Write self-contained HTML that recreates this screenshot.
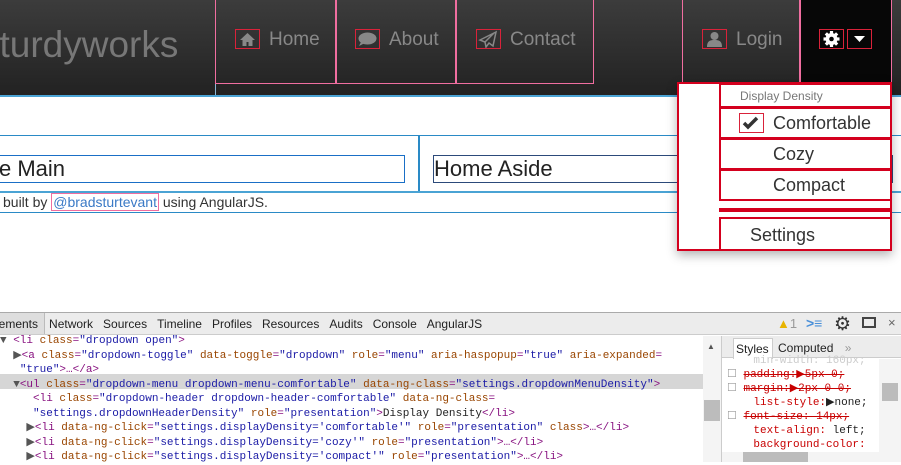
<!DOCTYPE html>
<html><head><meta charset="utf-8"><style>
*{box-sizing:border-box;margin:0;padding:0}
body{width:901px;height:462px;overflow:hidden;background:#fff;font-family:"Liberation Sans",sans-serif;position:relative}
.abs{position:absolute}
.nav{left:0;top:0;width:901px;height:95px;background:linear-gradient(#3c3c3c,#222)}
.logo{left:-19px;top:24px;font-size:37px;color:#777}
.ni{top:0;height:84px;border:1px solid #f06ea0;border-top:none}
.ni span.t{position:absolute;top:29px;font-size:19px;color:#888}
.ib{position:absolute;top:29px;width:25px;height:20px;border:1px solid #d9223a}
.dd{left:677px;top:82px;width:215px;height:169px;border:2px solid #d4001e;background:#fff;box-shadow:0 4px 10px rgba(0,0,0,.3)}
.it{position:absolute;left:40px;width:173px;border:2px solid #d4001e;font-size:18px;color:#333}
.code{font-family:"Liberation Mono",monospace;font-size:11px;line-height:14.5px;white-space:pre;color:#881280}
.at{color:#994500}.v{color:#1a1aa6}.tx{color:#222}
.css{font-family:"Liberation Mono",monospace;font-size:11px;line-height:14px;white-space:pre;color:#c80000}
</style></head><body>
<div class="abs nav"></div>
<div class="abs logo">sturdyworks</div>
<div class="abs" style="left:215px;top:0;width:1px;height:95px;background:#8ab8d6"></div>
<div class="abs ni" style="left:215px;width:121px"><div class="ib" style="left:19px"><svg width="23" height="18" viewBox="0 0 23 18"><path d="M11.5 3L4 10h2.5v6h4v-4h2v4h4v-6H19z" fill="#888"/></svg></div><span class="t" style="left:53px">Home</span></div>
<div class="abs ni" style="left:336px;width:120px"><div class="ib" style="left:18px"><svg width="23" height="18" viewBox="0 0 23 18"><ellipse cx="11.5" cy="8.5" rx="9" ry="6" fill="#888"/><path d="M5 12l-2 4 6-3z" fill="#888"/></svg></div><span class="t" style="left:52px">About</span></div>
<div class="abs ni" style="left:456px;width:138px"><div class="ib" style="left:19px"><svg width="23" height="18" viewBox="0 0 23 18"><path d="M19 2L3 10l5 2 1 5 3-4 4 3z M8 12l9-9" fill="none" stroke="#888" stroke-width="1.5"/></svg></div><span class="t" style="left:53px">Contact</span></div>
<div class="abs ni" style="left:682px;width:118px;border-top:none"><div class="ib" style="left:19px"><svg width="23" height="18" viewBox="0 0 23 18"><circle cx="11.5" cy="6" r="4" fill="#888"/><path d="M4 17c0-6 3-7 7.5-7s7.5 1 7.5 7z" fill="#888"/></svg></div><span class="t" style="left:53px">Login</span></div>
<div class="abs" style="left:800px;top:0;width:92px;height:84px;background:#070707;border-left:1px solid #f06ea0;border-right:1px solid #f06ea0"></div>
<div class="abs" style="left:819px;top:29px;width:25px;height:20px;border:1px solid #d9223a"><svg width="23" height="18" viewBox="0 0 23 18"><g transform="translate(11.5 9)" fill="#fff"><circle r="6"/><rect x="-1.6" y="-8" width="3.2" height="16"/><rect x="-1.6" y="-8" width="3.2" height="16" transform="rotate(45)"/><rect x="-1.6" y="-8" width="3.2" height="16" transform="rotate(90)"/><rect x="-1.6" y="-8" width="3.2" height="16" transform="rotate(135)"/><circle r="2.3" fill="#070707"/></g></svg></div>
<div class="abs" style="left:847px;top:29px;width:25px;height:20px;border:1px solid #d9223a"><svg width="23" height="18"><path d="M6 6h11l-5.5 6z" fill="#fff"/></svg></div>
<div class="abs" style="left:0;top:95px;width:901px;height:2px;background:#4aa3d4"></div>
<div class="abs" style="left:0;top:135px;width:901px;height:1px;background:#2a8ac6"></div>
<div class="abs" style="left:418px;top:135px;width:2px;height:57px;background:#2a8ac6"></div>
<div class="abs" style="left:-2px;top:155px;width:407px;height:28px;border:1px solid #1a6fc6;font-size:22px;line-height:26px;color:#222">e Main</div>
<div class="abs" style="left:433px;top:155px;width:460px;height:28px;border:1px solid #2c4a7a;font-size:22px;line-height:26px;color:#222">Home Aside</div>
<div class="abs" style="left:0;top:191px;width:901px;height:2px;background:#4aa3d4"></div>
<div class="abs" style="left:3px;top:194px;font-size:14px;color:#333">built by <span style="color:#3a7ac6;border:1px solid #f06ea0;padding:0 1px">@bradsturtevant</span> using AngularJS.</div>
<div class="abs" style="left:0;top:212px;width:901px;height:1px;background:#2a8ac6"></div>
<div class="abs dd">
<div class="it" style="top:-1px;height:25px;font-size:12px;color:#777;padding:4px 0 0 19px">Display Density</div>
<div class="it" style="top:23px;height:32px;padding:4px 0 0 52px">Comfortable<div style="position:absolute;left:18px;top:4px;width:25px;height:20px;border:1px solid #d9223a"><svg width="23" height="18"><path d="M4 9l4 4 9-9" fill="none" stroke="#333" stroke-width="3.5"/></svg></div></div>
<div class="it" style="top:54px;height:32px;padding:4px 0 0 52px">Cozy</div>
<div class="it" style="top:85px;height:32px;padding:4px 0 0 52px">Compact</div>
<div class="it" style="top:124px;height:4px"></div>
<div class="it" style="top:133px;height:34px;padding:6px 0 0 29px">Settings</div>
</div>
<div class="abs" style="left:0;top:312px;width:901px;height:1px;background:#aaa"></div>
<div class="abs" style="left:0;top:313px;width:901px;height:22px;background:#ececec;border-bottom:1px solid #ccc"></div>
<div class="abs" style="left:0;top:313px;width:45px;height:21px;background:#dedede;border-right:1px solid #bbb"></div>
<div class="abs" style="left:-4px;top:317px;font-size:12px;color:#222">lements<span style="margin-left:11px">Network</span><span style="margin-left:10px">Sources</span><span style="margin-left:10px">Timeline</span><span style="margin-left:10px">Profiles</span><span style="margin-left:10px">Resources</span><span style="margin-left:10px">Audits</span><span style="margin-left:10px">Console</span><span style="margin-left:10px">AngularJS</span></div>
<div class="abs" style="left:777px;top:316px;font-size:13px;color:#999"><span style="color:#e8b400">▲</span>1</div>
<div class="abs" style="left:806px;top:315px;font-size:14px;color:#4a90d9;font-weight:bold">&gt;≡</div>
<div class="abs" style="left:834px;top:313px;font-size:19px;color:#333">⚙</div>
<div class="abs" style="left:862px;top:317px;width:14px;height:11px;border:2px solid #444"></div>
<div class="abs" style="left:888px;top:315px;font-size:13px;color:#666">×</div>
<div class="abs" style="left:0;top:374px;width:703px;height:15px;background:#d6d6d6"></div>
<div class="abs code" style="left:0;top:334px"><span style="color:#555">▼</span> &lt;li <span class="at">class</span>=<span class="v">"dropdown open"</span>&gt;
  <span style="color:#555">▶</span>&lt;a <span class="at">class</span>=<span class="v">"dropdown-toggle"</span> <span class="at">data-toggle</span>=<span class="v">"dropdown"</span> <span class="at">role</span>=<span class="v">"menu"</span> <span class="at">aria-haspopup</span>=<span class="v">"true"</span> <span class="at">aria-expanded</span>=
   <span class="v">"true"</span>&gt;…&lt;/a&gt;
  <span style="color:#555">▼</span>&lt;ul <span class="at">class</span>=<span class="v">"dropdown-menu dropdown-menu-comfortable"</span> <span class="at">data-ng-class</span>=<span class="v">"settings.dropdownMenuDensity"</span>&gt;
     &lt;li <span class="at">class</span>=<span class="v">"dropdown-header dropdown-header-comfortable"</span> <span class="at">data-ng-class</span>=
     <span class="v">"settings.dropdownHeaderDensity"</span> <span class="at">role</span>=<span class="v">"presentation"</span>&gt;<span class="tx">Display Density</span>&lt;/li&gt;
    <span style="color:#555">▶</span>&lt;li <span class="at">data-ng-click</span>=<span class="v">"settings.displayDensity='comfortable'"</span> <span class="at">role</span>=<span class="v">"presentation"</span> <span class="at">class</span>&gt;…&lt;/li&gt;
    <span style="color:#555">▶</span>&lt;li <span class="at">data-ng-click</span>=<span class="v">"settings.displayDensity='cozy'"</span> <span class="at">role</span>=<span class="v">"presentation"</span>&gt;…&lt;/li&gt;
    <span style="color:#555">▶</span>&lt;li <span class="at">data-ng-click</span>=<span class="v">"settings.displayDensity='compact'"</span> <span class="at">role</span>=<span class="v">"presentation"</span>&gt;…&lt;/li&gt;</div>
<div class="abs" style="left:703px;top:336px;width:18px;height:126px;background:#f4f4f4"></div>
<div class="abs" style="left:704px;top:400px;width:16px;height:21px;background:#bcbcbc"></div>
<div class="abs" style="left:707px;top:342px;font-size:8px;color:#555">▲</div>
<div class="abs" style="left:721px;top:336px;width:1px;height:126px;background:#ccc"></div>
<div class="abs" style="left:722px;top:336px;width:179px;height:22px;background:#ececec;border-bottom:1px solid #ccc"></div>
<div class="abs" style="left:733px;top:338px;width:40px;height:21px;background:#fff;border:1px solid #ccc;border-bottom:none;font-size:12px;padding:3px 0 0 2px;color:#222">Styles</div>
<div class="abs" style="left:778px;top:341px;font-size:12px;color:#222">Computed <span style="color:#999;margin-left:8px">»</span></div>
<div class="abs css" style="left:727px;top:354px"><span style="color:#ccc">    min-width: 160px;</span>
<span style="color:#999">☐</span> <s>padding:▶5px 0;</s>
<span style="color:#999">☐</span> <s>margin:▶2px 0 0;</s>
    list-style:<span style="color:#222">▶none;</span>
<span style="color:#999">☐</span> <s>font-size: 14px;</s>
    text-align:<span style="color:#222"> left;</span>
    background-color:</div>
<div class="abs" style="left:879px;top:359px;width:22px;height:103px;background:#f4f4f4"></div>
<div class="abs" style="left:882px;top:383px;width:16px;height:18px;background:#bcbcbc"></div>
<div class="abs" style="left:722px;top:452px;width:157px;height:10px;background:#f4f4f4"></div>
<div class="abs" style="left:743px;top:452px;width:65px;height:10px;background:#bcbcbc"></div>
</body></html>
